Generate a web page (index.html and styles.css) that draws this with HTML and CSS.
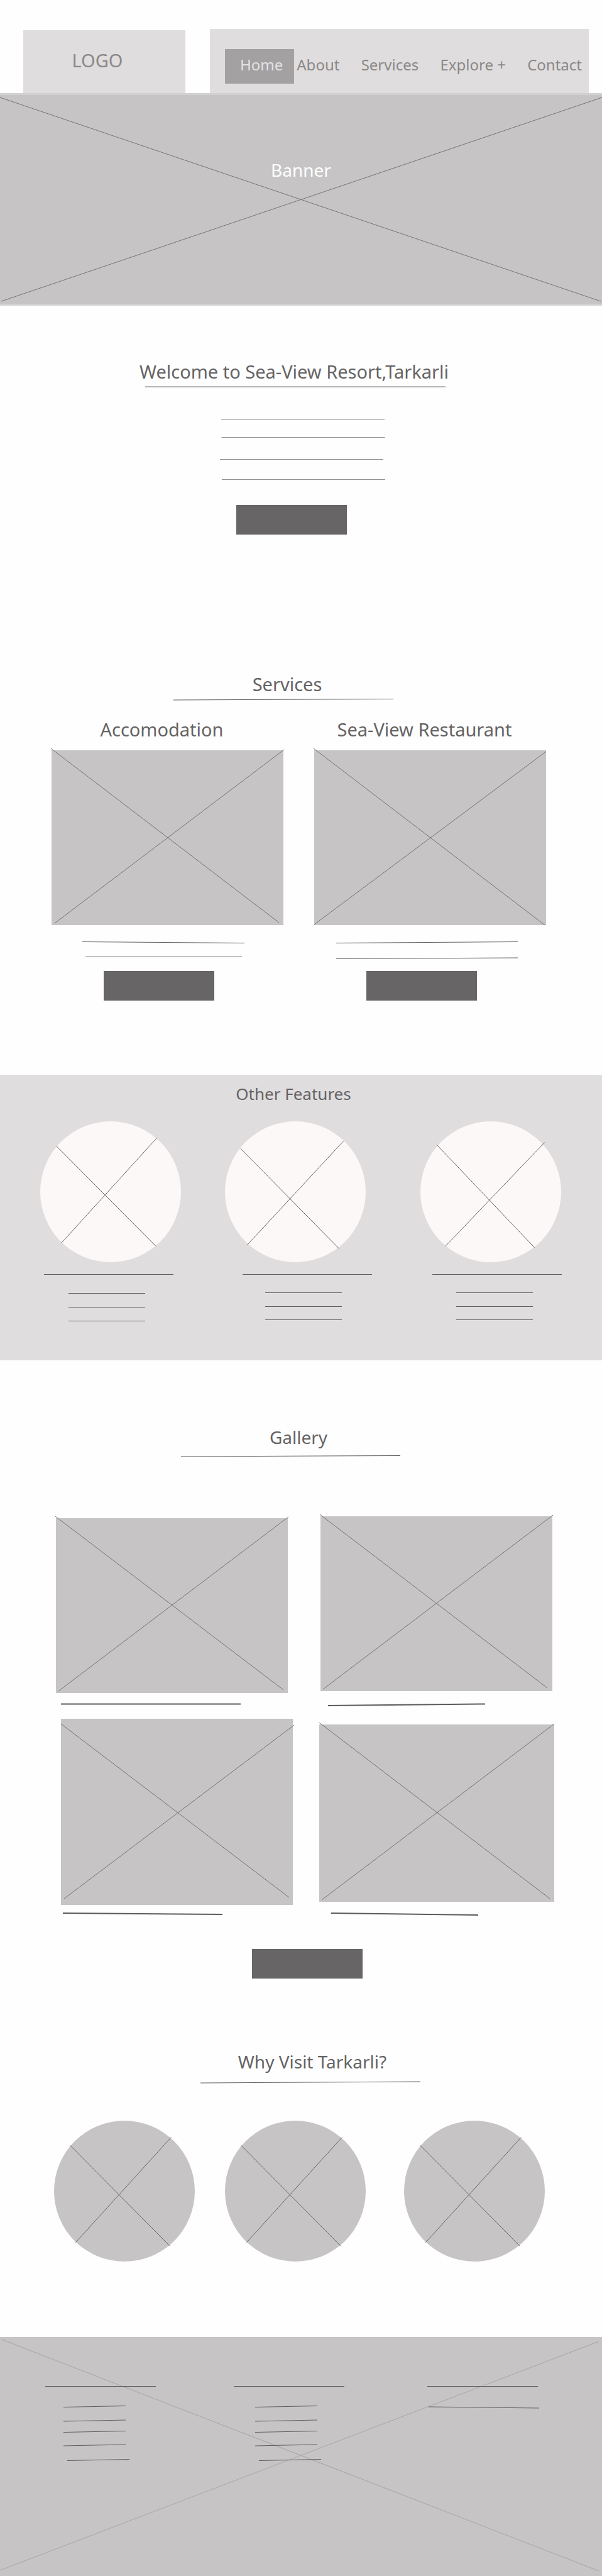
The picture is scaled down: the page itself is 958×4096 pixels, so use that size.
FILE: index.html
```html
<!DOCTYPE html>
<html lang="en">
<head>
<meta charset="utf-8">
<meta name="viewport" content="width=device-width, initial-scale=1">
<title>Sea-View Resort, Tarkarli</title>
<link rel="stylesheet" href="styles.css">
</head>
<body>
<header class="header">
  <a class="logo" href="#">LOGO</a>
  <nav class="nav">
    <a class="nav-link nav-active" href="#">Home</a>
    <div class="nav-rest">
      <a class="nav-link" href="#about">About</a>
      <a class="nav-link" href="#services">Services</a>
      <a class="nav-link" href="#features">Explore +</a>
      <a class="nav-link" href="#footer">Contact</a>
    </div>
  </nav>
</header>

<main>
  <section class="banner">
    <svg class="banner-cross cross" viewBox="0 0 958 338" preserveAspectRatio="none" aria-hidden="true">
      <path d="M0 4 956 334M958 4 2 334"/>
    </svg>
    <h1 class="banner-title">Banner</h1>
  </section>

  <section class="welcome" id="about">
    <h2 class="title title-large title-welcome">Welcome to Sea-View Resort,Tarkarli</h2>
    <svg class="drawing soft" viewBox="0 0 958 192" aria-hidden="true">
      <path class="underline" d="M231 4H709"/>
      <path d="M352 56.500H612M352.500 84.500H612.500M350 119.500H610M353 151.500H613"/>
    </svg>
    <button class="button button-welcome" type="button" aria-label="Read more"></button>
  </section>

  <section class="services" id="services">
    <h2 class="title title-large title-services">Services</h2>
    <svg class="drawing rules" viewBox="0 0 958 16" aria-hidden="true"><path d="M276 5 626 3.500"/></svg>
    <div class="cards">
      <article class="card">
        <h3 class="title title-large card-title">Accomodation</h3>
        <svg class="drawing cross" viewBox="0 0 369 278" aria-hidden="true">
          <rect width="369" height="278"/><path d="M-1-3 362 274M370-1 5 275"/>
        </svg>
        <svg class="drawing rules" viewBox="0 0 369 73" aria-hidden="true"><path d="M49 26.500 307 28.500M54 50.500H303"/></svg>
        <button class="button button-card" type="button" aria-label="View accomodation"></button>
      </article>
      <article class="card">
        <h3 class="title title-large card-title">Sea-View Restaurant</h3>
        <svg class="drawing cross" viewBox="0 0 369 278" aria-hidden="true">
          <rect width="369" height="278"/><path d="M-1-3 367 278M369 2 0 277"/>
        </svg>
        <svg class="drawing rules" viewBox="0 0 369 73" aria-hidden="true"><path d="M35 28.500 324 26.500M35 53.500 324 52"/></svg>
        <button class="button button-card" type="button" aria-label="View restaurant"></button>
      </article>
    </div>
  </section>

  <section class="features" id="features">
    <h2 class="title title-features">Other Features</h2>
    <div class="trio trio-features">
      <article>
        <svg class="drawing cross light" viewBox="0 0 280 280" aria-hidden="true">
          <circle cx="140" cy="140" r="140"/><path d="M32 49 230 248M232 33 42 242"/>
        </svg>
        <svg class="drawing rules" viewBox="0 0 224 97" aria-hidden="true"><path d="M6 19.500H212M45 49.500H167M45 72H167M45 93.500H167"/></svg>
      </article>
      <article>
        <svg class="drawing cross light" viewBox="0 0 280 280" aria-hidden="true">
          <circle cx="140" cy="140" r="140"/><path d="M31 54 227 253M236 39 44 246"/>
        </svg>
        <svg class="drawing rules" viewBox="0 0 224 97" aria-hidden="true"><path d="M28 19.500H234M64 48.500H186M64 70.500H186M64 91.500H186"/></svg>
      </article>
      <article>
        <svg class="drawing cross light" viewBox="0 0 280 280" aria-hidden="true">
          <circle cx="140" cy="140" r="140"/><path d="M33 47 227 251M247 42 50 248"/>
        </svg>
        <svg class="drawing rules" viewBox="0 0 224 97" aria-hidden="true"><path d="M19 19.500H225M57 48.500H179M57 70.500H179M57 91.500H179"/></svg>
      </article>
    </div>
  </section>

  <section class="gallery">
    <h2 class="title title-gallery">Gallery</h2>
    <svg class="drawing rules" viewBox="0 0 958 16" aria-hidden="true"><path d="M288 11 637 9.500"/></svg>
    <div class="photos">
      <svg class="drawing cross" viewBox="0 0 369 322" aria-hidden="true">
        <rect y="3" width="369" height="278"/><path d="M-1 0 362 276M370 1 4 278"/>
        <path class="caption" d="M8 298.500H294"/>
      </svg>
      <svg class="drawing cross" viewBox="0 0 369 322" aria-hidden="true">
        <rect width="369" height="278"/><path d="M-1-3 361 273M370-2 4 275"/>
        <path class="caption" d="M12 301 262 298.500"/>
      </svg>
      <svg class="drawing cross" viewBox="0 0 369 316" aria-hidden="true">
        <rect x="8" width="369" height="296"/><path d="M8 8 371 284M379 10 13 286"/>
        <path class="caption" d="M11 309 265 311"/>
      </svg>
      <svg class="drawing cross" viewBox="0 0 369 316" aria-hidden="true">
        <rect x="-2" y="9" width="374" height="282"/><path d="M-2 6 365 286M372 8 2 288"/>
        <path class="caption" d="M17 309 251 312"/>
      </svg>
    </div>
    <button class="button button-gallery" type="button" aria-label="View gallery"></button>
  </section>

  <section class="reasons">
    <h2 class="title title-reasons">Why Visit Tarkarli?</h2>
    <svg class="drawing rules" viewBox="0 0 958 16" aria-hidden="true"><path d="M319 14 669 12"/></svg>
    <div class="trio trio-reasons">
      <svg class="drawing cross" viewBox="0 0 280 281" aria-hidden="true">
        <circle cx="140" cy="140" r="140"/><path d="M32 49 230 249M233 33 43 242"/>
      </svg>
      <svg class="drawing cross" viewBox="0 0 280 281" aria-hidden="true">
        <circle cx="140" cy="140" r="140"/><path d="M32 49 230 249M233 33 43 242"/>
      </svg>
      <svg class="drawing cross" viewBox="0 0 280 281" aria-hidden="true">
        <circle cx="140" cy="140" r="140"/><path d="M32 49 230 249M233 33 43 242"/>
      </svg>
    </div>
  </section>
</main>

<footer class="footer" id="footer">
  <svg class="footer-cross" viewBox="0 0 958 380" preserveAspectRatio="none" aria-hidden="true">
    <path d="M3 4 953 371M953 7 0 370"/>
  </svg>
  <svg class="drawing rules" viewBox="0 0 176 140" aria-hidden="true">
    <path d="M0 8.500H176M29 41.500 128 39.500M29 64 128 62M29 81.500 128 79.500M29 103 128 101M35 126.500 134 124.500"/>
  </svg>
  <svg class="drawing rules" viewBox="0 0 176 140" aria-hidden="true">
    <path d="M0 8.500H176M34 41.500 133 39.500M34 64 133 62M34 81.500 133 79.500M34 103 133 101M40 126.500 139 124.500"/>
  </svg>
  <svg class="drawing rules" viewBox="0 0 176 140" aria-hidden="true">
    <path d="M0 8.500H176M2 41 178 43"/>
  </svg>
</footer>
</body>
</html>
```
FILE: styles.css
```css
* {
  box-sizing: border-box;
}

body {
  margin: 0;
  background: #fefefe;
  color: #656364;
  font-family: "Noto Sans", "Open Sans", sans-serif;
}

/* Header */
.header {
  display: grid;
  grid-template-columns: 37fr 258fr 39fr 603fr 21fr;
  padding-top: 46px;
}

.logo {
  grid-column: 2;
  display: flex;
  align-items: center;
  justify-content: center;
  margin-top: 2px;
  padding: 0 22px 6px 0;
  background: #dfddde;
  color: #8b8887;
  font-size: 29px;
  text-decoration: none;
}

.nav {
  grid-column: 4;
  display: flex;
  gap: 4px;
  padding: 32px 11px 15px 24px;
  background: #dfddde;
}

.nav-rest {
  flex: 1;
  display: flex;
  justify-content: space-between;
}

.nav-link {
  padding-bottom: 5px;
  color: #8b8887;
  font-size: 24px;
  line-height: 50px;
  text-decoration: none;
  white-space: nowrap;
}

.nav-active {
  padding-left: 24px;
  padding-right: 18px;
  background: #a3a1a2;
  color: #e4e2e3;
}

/* Shared pieces */
.title {
  margin: 0;
  font-size: 28px;
  font-weight: 400;
  line-height: 40px;
  text-align: center;
}

.title-large {
  font-size: 29px;
}

.drawing {
  display: block;
  width: 100%;
  height: auto;
  overflow: visible;
}

.cross {
  fill: #c6c4c5;
  stroke: #737172;
  stroke-width: 1;
}

.cross rect,
.cross circle {
  stroke: none;
}

.light {
  fill: #fcf8f7;
}

.trio .cross {
  stroke: #656364;
  stroke-width: 1.25;
}

.rules {
  fill: none;
  stroke: #605e5f;
  stroke-width: 1;
}

.soft {
  fill: none;
  stroke: #939192;
  stroke-width: 1;
}

.underline {
  stroke: #b5b5b5;
  stroke-width: 2;
}

.cross .caption {
  stroke: #5c595a;
  stroke-width: 2;
}

.button {
  display: block;
  width: 176px;
  height: 47px;
  padding: 0;
  border: 0;
  background: #676566;
}

/* Banner */
.banner {
  position: relative;
  padding: 99px 0 193px;
  border-top: 3px solid #d2d0d1;
  border-bottom: 3px solid #d2d0d1;
  background: #c6c4c5;
}

.banner-cross {
  position: absolute;
  inset: 0;
  width: 100%;
  height: 100%;
}

.banner-title {
  position: relative;
  margin: 0;
  color: #fff;
  font-size: 28px;
  font-weight: 400;
  line-height: 40px;
  text-align: center;
}

/* Welcome */
.welcome {
  padding-top: 85px;
}

.title-welcome {
  padding-right: 22px;
}

.button-welcome {
  margin-left: 39.3%;
}

/* Services */
.services {
  padding-top: 218px;
}

.title-services {
  padding-right: 44px;
}

.cards {
  display: grid;
  grid-template-columns: 1fr 1fr;
  gap: 49px;
  padding: 16px 89px 118px 82px;
}

.card-title {
  padding-right: 18px;
  margin-bottom: 13px;
}

.button-card {
  margin-left: 22.5%;
}

/* Rows of three circles */
.trio {
  display: grid;
}

.trio > :nth-child(1) {
  grid-column: 2;
}

.trio > :nth-child(2) {
  grid-column: 4;
}

.trio > :nth-child(3) {
  grid-column: 6;
}

.features {
  padding: 10px 0 59px;
  background: #dfddde;
}

.title-features {
  padding-right: 24px;
  font-size: 26px;
}

.trio-features {
  grid-template-columns: 64fr 224fr 70fr 224fr 87fr 224fr 65fr;
  padding-top: 24px;
}

/* Gallery */
.gallery {
  padding-top: 102px;
}

.title-gallery {
  padding-right: 8px;
}

.photos {
  display: grid;
  grid-template-columns: 1fr 1fr;
  column-gap: 52px;
  padding: 90px 79px 50px 89px;
}

.button-gallery {
  margin-left: 41.9%;
}

/* Reasons */
.reasons {
  padding: 112px 0 119px;
}

.title-reasons {
  padding-left: 36px;
}

.trio-reasons {
  grid-template-columns: 86fr 224fr 48fr 224fr 61fr 224fr 91fr;
  padding-top: 58px;
}

/* Footer */
.footer {
  position: relative;
  display: grid;
  grid-template-columns: 72fr 176fr 124fr 176fr 132fr 176fr 102fr;
  padding: 70px 0 171px;
  background: #c6c4c5;
}

.footer-cross {
  position: absolute;
  inset: 0;
  width: 100%;
  height: 100%;
  fill: none;
  stroke: #aaa6a6;
}

.footer .rules {
  position: relative;
}

.footer .rules:nth-child(2) {
  grid-column: 2;
}

.footer .rules:nth-child(3) {
  grid-column: 4;
}

.footer .rules:nth-child(4) {
  grid-column: 6;
}
```
